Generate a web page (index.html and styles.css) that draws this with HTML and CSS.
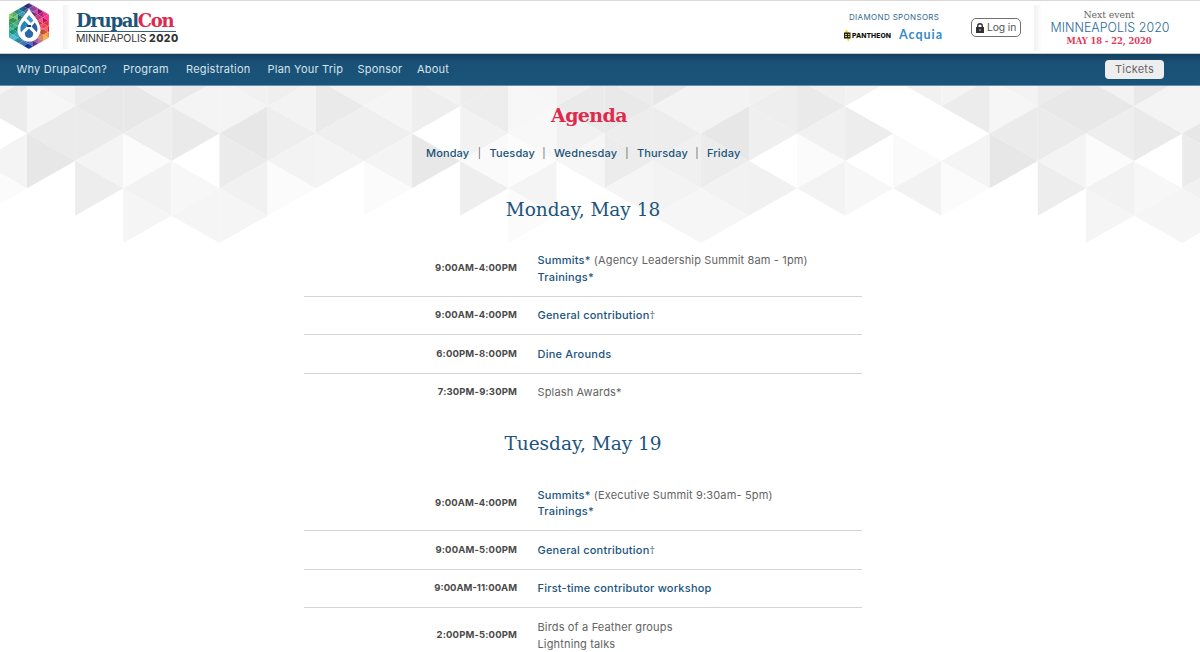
FILE: index.html
```
<!DOCTYPE html>
<html lang="en">
<head>
<meta charset="utf-8">
<title>Agenda | DrupalCon Minneapolis 2020</title>
<link rel="stylesheet" href="styles.css">
</head>
<body>
<header class="header">
  <svg class="logo" viewBox="0 0 42 46">
    <defs><clipPath id="hex"><path d="M21 0L41 11.5V34.5L21 46L1 34.5V11.5Z"/></clipPath></defs>
    <g id="mosaic" clip-path="url(#hex)"></g>
    <path fill="#fff" d="M21 5C22 10 32.500 17 32.500 27A11.500 11.500 0 0 1 9.500 27C9.500 17 20 10 21 5Z"/>
    <path fill="#3f97cf" d="M21 12L25.500 17.500L22.800 20L18.500 15.500Z"/>
    <path fill="#2487b5" d="M16.500 17.800L20.500 21.800L13 29.300C11.500 25 12.500 21.500 16.500 17.800Z"/>
    <path fill="#2b5ca8" d="M26.800 19.500C29.500 23 30.200 26 28.800 29.300L23.500 23.500Z"/>
    <path fill="#2868ab" d="M21 25.500L25 29.500A4.200 4.200 0 1 1 17 29.500Z"/>
    <path d="M19 23H23" stroke="#233c87" stroke-width="2"/>
  </svg>
  <div class="brand">
    <div class="brand-name">Drupal<span>Con</span></div>
    <div class="brand-city">MINNEAPOLIS <b>2020</b></div>
  </div>
  <div class="sponsors">
    <div class="sponsor-title">DIAMOND SPONSORS</div>
    <div class="sponsor-row">
      <svg class="pan-mark" viewBox="0 0 7 13"><path fill="#f3d42e" d="M2 0L5 4H1ZM3 9H6L4 13Z"/><path fill="#222" d="M0 3.500H6.500V9.500H0Z"/><path stroke="#f3d42e" d="M1 5.500H3M4 5.500H5.500M1 7.500H3M4 7.500H5.500"/></svg>
      <span class="pantheon">PANTHEON</span>
      <span class="acquia">Acquia</span>
    </div>
  </div>
  <a class="login"><svg viewBox="0 0 8 10"><path fill="#333" d="M0 4H8V10H0Z"/><path fill="none" stroke="#333" stroke-width="1.400" d="M1.700 4.500V3A2.300 2.300 0 0 1 6.300 3V4.500"/><path stroke="#ccc" d="M4 6V8"/></svg><span>Log in</span></a>
  <div class="event">
    <div class="event-next">Next event</div>
    <div class="event-city">MINNEAPOLIS 2020</div>
    <div class="event-date">MAY 18 - 22, 2020</div>
  </div>
</header>
<nav class="nav">
  <a class="n1">Why DrupalCon?</a><a class="n2">Program</a><a class="n3">Registration</a><a class="n4">Plan Your Trip</a><a class="n5">Sponsor</a><a class="n6">About</a>
  <a class="tickets">Tickets</a>
</nav>
<main class="main">
  <svg class="backdrop" id="backdrop" viewBox="0 85 1200 160"></svg>
  <h1>Agenda</h1>
  <div class="days"><a class="d1">Monday</a><i>|</i><a class="d2">Tuesday</a><i>|</i><a class="d3">Wednesday</a><i>|</i><a class="d4">Thursday</a><i>|</i><a class="d5">Friday</a></div>
  <h2>Monday, May 18</h2>
  <section class="table">
    <div class="row"><b>9:00AM-4:00PM</b><p><a>Summits*</a> (Agency Leadership Summit 8am - 1pm)<br><a>Trainings*</a></p></div>
    <div class="row"><b>9:00AM-4:00PM</b><p><a>General contribution</a><span class="dagger">†</span></p></div>
    <div class="row"><b>6:00PM-8:00PM</b><p><a>Dine Arounds</a></p></div>
    <div class="row"><b>7:30PM-9:30PM</b><p>Splash Awards*</p></div>
  </section>
  <h2>Tuesday, May 19</h2>
  <section class="table">
    <div class="row"><b>9:00AM-4:00PM</b><p><a>Summits*</a> (Executive Summit 9:30am- 5pm)<br><a>Trainings*</a></p></div>
    <div class="row"><b>9:00AM-5:00PM</b><p><a>General contribution</a><span class="dagger">†</span></p></div>
    <div class="row"><b class="tight">9:00AM-11:00AM</b><p><a>First-time contributor workshop</a></p></div>
    <div class="row"><b>2:00PM-5:00PM</b><p>Birds of a Feather groups<br>Lightning talks</p></div>
  </section>
</main>
<script src="art.js"></script>
</body>
</html>
```
FILE: styles.css
```
* { box-sizing: border-box; }
body { margin: 0; width: 1200px; height: 652px; overflow: hidden; background: #fff; color: #636363; font-family: Inter, "Open Sans", sans-serif; font-size: 11px; }
.header { display: flex; height: 54px; border-top: 1px solid #d9d9d9; border-bottom: 1px solid #c3cbd1; background: #fff; white-space: nowrap; }
.logo { width: 42px; height: 46px; margin: 2px 0 0 8px; }
.brand { width: 142px; height: 44px; margin: 4px 0 0 13px; padding-left: 13px; background: linear-gradient(90deg, #f1f1f1, #fff 8px); }
.brand-name { width: 100px; height: 27px; padding-top: 4px; border-bottom: 1px solid #35627f; font: bold 18px/24px "DejaVu Serif", serif; letter-spacing: -1.25px; color: #1b5478; }
.brand-name span { color: #df2a50; }
.brand-city { font-size: 10.5px; line-height: 12px; margin-top: 1px; letter-spacing: -.15px; color: #333; }
.brand-city b { font-weight: 800; letter-spacing: .4px; }
.sponsors { width: 101px; margin-left: 639px; padding-top: 11px; }
.sponsor-title { font-size: 8px; line-height: 10px; padding-left: 5px; letter-spacing: .35px; color: #336a91; }
.sponsor-row { display: flex; align-items: center; height: 14px; margin-top: 6px; }
.pan-mark { width: 7px; height: 13px; }
.pantheon { width: 48px; padding-left: 1px; font-size: 6.8px; font-weight: 800; color: #111; letter-spacing: .05px; }
.acquia { font: bold 12.5px/14px Lato, sans-serif; letter-spacing: 1px; color: #3789ca; }
.login { display: flex; align-items: center; width: 50px; height: 19px; margin: 17px 0 0 26px; padding-left: 4px; border: 1px solid #707070; border-radius: 5px; font-size: 10.3px; color: #555; }
.login svg { width: 8px; height: 10px; margin-right: 3px; }
.login span { margin-top: -1px; letter-spacing: -.1px; }
.event { width: 150px; height: 46px; margin: 4px 0 0 13px; padding-top: 3px; text-align: center; background: linear-gradient(90deg, #f1f1f1, #fff 8px); }
.event-next { font: 9.4px/13px "DejaVu Serif", serif; letter-spacing: -.1px; color: #666; }
.event-city { font-size: 12.4px; font-weight: 300; line-height: 13px; padding-left: 2px; letter-spacing: .05px; color: #286a94; }
.event-date { font: bold 8.4px/14px "DejaVu Serif", serif; letter-spacing: -.05px; color: #e2385c; }
.nav { display: flex; align-items: center; position: relative; z-index: 1; height: 32px; padding: 0 36px 1px 16.5px; gap: 16px; background: linear-gradient(#153f5b, #1a5075 8px, #1a547a); border-bottom: 1px solid #6990ab; color: #d5e3ed; font-size: 11px; white-space: nowrap; }
.n1 { width: 90.5px; }
.n2 { width: 47px; }
.n3 { width: 65.5px; }
.n4 { width: 74px; }
.n5 { width: 43.5px; }
.nav a { letter-spacing: .22px; }
.nav .tickets { width: 59px; height: 19px; margin: 1px 0 0 auto; border-radius: 4px; background: #eee; text-align: center; line-height: 18px; color: #666; }
.main { position: relative; height: 567px; padding-top: 16px; }
.backdrop { position: absolute; left: 0; top: -1px; width: 1200px; height: 160px; z-index: -1; }
h1 { width: 1178px; margin: 0; text-align: center; font: bold 19px/26px "DejaVu Serif", serif; letter-spacing: -.6px; color: #df2a4c; }
.days { display: flex; height: 16px; margin-top: 17px; padding-left: 426px; line-height: 16px; font-weight: 500; color: #20547a; white-space: nowrap; }
.days i { width: 20px; text-align: center; font-style: normal; font-weight: 400; font-size: 10px; color: #666; }
.d1 { width: 43.5px; }
.d2 { width: 44.5px; }
.d3 { width: 63px; }
.d4 { width: 50px; }
.days a { letter-spacing: .13px; }
h2 { width: 1166px; height: 63.6px; margin: 0; text-align: center; font: 18.5px/63px "DejaVu Serif", serif; letter-spacing: 0; color: #1c547e; }
.days + h2 { margin-top: 17px; }
.table { width: 558px; height: 170.9px; margin-left: 304px; }
.row { display: grid; grid-template-columns: 213px 1fr; column-gap: 20.5px; align-items: center; padding: 10.5px 0; border-bottom: 1px solid #d4d4d4; line-height: 16.6px; }
.row:last-child { border-bottom: 0; }
.row b { text-align: right; font-size: 9.5px; font-weight: 700; color: #4a4a4a; letter-spacing: .15px; }
.row .tight { letter-spacing: 0; }
.row p { margin: 0; letter-spacing: .15px; }
.row a { font-weight: 500; color: #20547e; letter-spacing: .22px; }
.dagger { font-family: "Open Sans", sans-serif; line-height: 1; }
```
FILE: art.js
```
const NS = 'http://www.w3.org/2000/svg';
function poly(parent, pts, fill) {
  const p = document.createElementNS(NS, 'polygon');
  p.setAttribute('points', pts.map(q => q.join(',')).join(' '));
  p.setAttribute('fill', fill);
  parent.appendChild(p);
}
// Grey level of each triangle, one entry per vertical strip, top to bottom.
const strips = [
  'f3 f6 eb e7 ff ff', 'ec e8 eb f4 ed ff', 'f2 e8 ee fb f2 f5', 'e9 f4 ea ff f7 f5', 'f1 f4 e7 eb f1 f5',
  'ef f3 ee f3 fb ff', 'f3 ea ef f4 ff ff', 'f3 f5 ef f4 fb ff', 'f3 ee ff e8 ff ff', 'ed ed f2 fa ee ff',
  'f6 f7 f8 fc f4 fb', 'f0 ea f1 f6 ff ff', 'ec e9 ed ec f5 ff', 'e8 f3 ed f0 f3 f6', 'f3 f3 e7 ec f2 f6',
  'f1 ee ef ff f1 ff', 'f0 ea f1 fb f3 ff', 'f2 ff ed ff f7 ff', 'f1 ff ff fa f2 ff', 'f4 ec ff f4 fb ff'
].map(s => s.split(' '));
const bg = document.getElementById('backdrop');
const X = k => 27 + 48.13 * k, Y = j => 78.8 + 27.37 * j;
for (let k = -1; k < 25; k++) {
  strips[(k + 20) % 20].forEach((g, j) => {
    if (g === 'ff') return;
    const even = (k + j) % 2 === 0;
    const apex = even ? k : k + 1, base = even ? k + 1 : k;
    poly(bg, [[X(apex), Y(j)], [X(base), Y(j - 1)], [X(base), Y(j + 1)]], '#' + g + g + g);
  });
}
// Logo mosaic: hue anchors blended over a triangular grid.
const anchors = [[3, 12, 105, 185, 80], [2, 25, 40, 165, 110], [5, 35, 50, 165, 185], [21, 45, 35, 80, 175], [18, 2, 75, 65, 150],
  [30, 6, 160, 50, 145], [39, 13, 235, 35, 125], [39, 24, 235, 65, 80], [37, 35, 240, 150, 55], [31, 41, 140, 65, 155], [12, 8, 30, 135, 155]];
const logo = document.getElementById('mosaic');
let n = 0;
for (let x = 0; x < 42; x += 5) for (let j = -1; j < 17; j++) {
  const odd = (x / 5 + j) % 2 === 0, y = j * 2.9;
  let w = 0, c = [0, 0, 0];
  anchors.forEach(a => { const d = 1 / (1 + Math.pow((a[0] - x - 2.5) ** 2 + (a[1] - y) ** 2, 1.5)); w += d; for (let i = 0; i < 3; i++) c[i] += a[i + 2] * d; });
  const shade = [-30, 12, 28, -10, 20, -18, 5][n++ * 3 % 7];
  const ax = odd ? x : x + 5, bx = odd ? x + 5 : x;
  poly(logo, [[ax, y], [bx, y - 2.9], [bx, y + 2.9]], 'rgb(' + c.map(v => Math.max(0, Math.min(255, Math.round(v / w + shade)))).join(',') + ')');
}
```
